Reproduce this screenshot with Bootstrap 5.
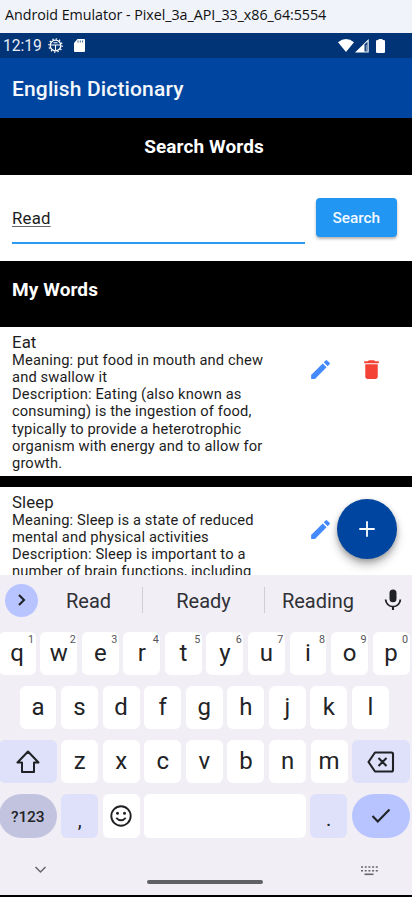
<!DOCTYPE html>
<html lang="en">
<head>
<meta charset="utf-8">
<meta name="viewport" content="width=device-width, initial-scale=1">
<title>English Dictionary</title>
<link href="https://cdn.jsdelivr.net/npm/bootstrap@5.3.0/dist/css/bootstrap.min.css" rel="stylesheet">
<style>
html,body{height:897px;overflow:hidden}
body{font-family:Roboto,"Liberation Sans",sans-serif;color:#1d1d1d;background:#000}
svg{display:block;flex:none}
.window-title{height:33px;background:#f0f3fa;color:#111;font:14.3px/30px "Open Sans","Noto Sans",sans-serif;padding-left:5px;white-space:nowrap;letter-spacing:-.05px}
.phone-status{height:25px;background:#003476;color:#e9eef6;font-size:15.6px;line-height:26px;padding:0 26px 0 3px}
.app-head{height:60px;background:#0046a0;color:#f4f7fb;font-size:21px;font-weight:500;line-height:62px;padding:0 12px;letter-spacing:.14px}
.search-head{height:56.5px;font-size:19px;font-weight:700;line-height:57px;letter-spacing:.1px}
.search-form{height:86px;background:#fff;padding:0 15px 0 12px;gap:11px}
.search-field{height:46.5px;margin-top:23px;border-bottom:2.2px solid #2b9af3;font-size:16.8px;line-height:41px}
.search-field span{text-decoration:underline;text-decoration-thickness:1px;text-underline-offset:2px;text-decoration-color:#666;letter-spacing:.2px}
.search-btn,.search-btn:hover{width:81.5px;height:39px;margin-top:23.5px;border:0;border-radius:4px;background:#2196f3;color:#f3f9ff;font-size:15.4px;font-weight:500;line-height:40px;padding:0;box-shadow:0 2px 3px rgba(0,0,0,.3)}
.words-head{height:66.9px;padding:0 12px;font-size:19px;font-weight:700;line-height:58px;letter-spacing:.1px}
.word-item{background:#fff;height:148.6px;padding:4.6px 12px 0;margin-bottom:11px}
.word-name{font-size:16.8px;line-height:20px;letter-spacing:.1px}
.word-text{font-size:14.7px;line-height:17.15px;letter-spacing:.14px;width:275px}
.word-item.cut{height:88.4px;margin:0;overflow:hidden}
.word-tools{gap:26px;margin:25.5px 16px 0 0}
.add-btn{position:absolute;left:337.4px;top:499px;width:60px;height:60px;border-radius:50%;background:#0046a0;border:0;box-shadow:0 6px 10px rgba(0,0,0,.25),0 2px 5px rgba(0,0,0,.22);padding:18px}
.keyboard{position:relative;height:320px;background:#f1eff5;color:#202124;overflow:hidden}
.suggest{height:56.4px;font-size:20px;color:#303136}
.suggest .more{width:33px;height:33px;margin:0 5px;border-radius:50%;background:#b8c4ff}
.suggest .word{padding-top:2px}
.suggest .rule{width:1px;height:26px;background:#cfced5}
.key-row{width:411px;margin-left:-1.3px;height:43.6px;gap:4.6px;margin-bottom:10.4px}
.key{flex:0 0 36.96px;height:100%;border-radius:6px;background:#fff;position:relative;font-size:24px;line-height:42px;text-align:center;color:#222326}
.key sup{position:absolute;right:1.5px;top:8.5px;font-size:10.8px;line-height:0;color:#55565a}
.key.tint{background:#dfe0fa}
.key.wide{flex-basis:58px}
.key.oval{border-radius:23px}
</style>
<script src="https://cdn.jsdelivr.net/npm/bootstrap@5.3.0/dist/js/bootstrap.bundle.min.js"></script>
</head>
<body>
<header>
<div class="window-title">Android Emulator - Pixel_3a_API_33_x86_64:5554</div>
<div class="phone-status d-flex align-items-center">
<span style="width:38px">12:19</span>
<svg style="margin-left:6.5px" width="15" height="15" viewBox="0 0 15 15" fill="none" stroke="#fff"><circle cx="7.5" cy="7.5" r="5.3" stroke-width="1.3"/><circle cx="7.5" cy="7.5" r="6.6" stroke-width="1.3" stroke-dasharray="1.4 2.06"/><path d="M2.5 7h10M7.5 7v5M5.5 4.7h4" stroke-width="1.1"/></svg>
<svg style="margin-left:10px" width="13" height="15" viewBox="0 0 13 15"><path d="M4.5 1H11q1 0 1 1v11q0 1-1 1H2q-1 0-1-1V5z" fill="#fff"/><path d="M5 2.5v2M7.3 2.5v2M9.6 2.5v2" stroke="#003476" stroke-width=".8"/></svg>
<svg class="ms-auto" width="48" height="16" viewBox="0 0 48 16"><path d="M0 4.3Q8-2.4 16 4.3L8 14z" fill="#fff"/><path d="M17 14.5 30.7 1v13.5z" fill="#fff"/><path d="M26.5 6.5v7h3V3.5z" fill="#003476"/><path d="M27.8 7.5v5.5h1V6.5z" fill="#8fa5c4"/><rect x="38" y="2" width="9" height="13" rx="1.2" fill="#fff"/><path d="M40.5 1h4v2h-4z" fill="#fff"/></svg>
</div>
<div class="app-head">English Dictionary</div>
</header>
<main>
<div class="search-head text-white text-center" style="padding-right:4px">Search Words</div>
<form class="search-form d-flex">
<div class="search-field flex-grow-1"><span>Read</span></div>
<button type="button" class="btn search-btn">Search</button>
</form>
<div class="words-head text-white">My Words</div>
<article class="word-item d-flex justify-content-between align-items-start">
<div><div class="word-name">Eat</div><div class="word-text">Meaning: put food in mouth and chew<br>and swallow it<br>Description: Eating (also known as<br>consuming) is the ingestion of food,<br>typically to provide a heterotrophic<br>organism with energy and to allow for<br>growth.</div></div>
<div class="word-tools d-flex"><svg width="25" height="25" viewBox="0 0 24 24" fill="#448aff"><path d="M3 17.25V21h3.75L17.81 9.94l-3.75-3.75L3 17.25zM20.71 7.04a1 1 0 0 0 0-1.41l-2.34-2.34a1 1 0 0 0-1.41 0l-1.83 1.83 3.75 3.75 1.83-1.83z"/></svg><svg width="25" height="25" viewBox="0 0 24 24" fill="#f44336"><path d="M6 19a2 2 0 0 0 2 2h8a2 2 0 0 0 2-2V7H6v12zM19 4h-3.5l-1-1h-5l-1 1H5v2h14V4z"/></svg></div>
</article>
<article class="word-item cut d-flex justify-content-between align-items-start">
<div><div class="word-name">Sleep</div><div class="word-text">Meaning: Sleep is a state of reduced<br>mental and physical activities<br>Description: Sleep is important to a<br>number of brain functions, including</div></div>
<div class="word-tools d-flex"><svg width="25" height="25" viewBox="0 0 24 24" fill="#448aff"><path d="M3 17.25V21h3.75L17.81 9.94l-3.75-3.75L3 17.25zM20.71 7.04a1 1 0 0 0 0-1.41l-2.34-2.34a1 1 0 0 0-1.41 0l-1.83 1.83 3.75 3.75 1.83-1.83z"/></svg><svg width="25" height="25"></svg></div>
</article>
<button class="add-btn" aria-label="Add word"><svg width="24" height="24" viewBox="0 0 24 24" fill="#fff"><path d="M19.7 12.9h-6.8v6.8h-1.8v-6.8H4.3v-1.8h6.8V4.3h1.8v6.8h6.8z"/></svg></button>
</main>
<section class="keyboard">
<div class="suggest d-flex align-items-center" style="padding-bottom:6.6px">
<div class="more d-flex align-items-center justify-content-center"><svg width="12" height="14" viewBox="0 0 12 14" fill="none" stroke="#202124" stroke-width="2.1"><path d="m3 2 5 5-5 5"/></svg></div>
<div class="word text-center" style="width:99px;padding-right:8px">Read</div><div class="rule"></div>
<div class="word text-center" style="width:121px">Ready</div><div class="rule"></div>
<div class="word text-center" style="width:106px">Reading</div>
<svg style="margin-left:8px" width="28" height="28" viewBox="0 0 24 24" fill="#202124"><path d="M12 14a3 3 0 0 0 3-3V6a3 3 0 0 0-6 0v5a3 3 0 0 0 3 3z"/><path d="M17.5 11.5a5.5 5.5 0 0 1-11 0H4.9a7.1 7.1 0 0 0 6.2 6.7V20.5h1.8v-2.3A7.1 7.1 0 0 0 19.1 11.5z"/></svg>
</div>
<div class="key-row d-flex"><div class="key">q<sup>1</sup></div><div class="key">w<sup>2</sup></div><div class="key">e<sup>3</sup></div><div class="key">r<sup>4</sup></div><div class="key">t<sup>5</sup></div><div class="key">y<sup>6</sup></div><div class="key">u<sup>7</sup></div><div class="key">i<sup>8</sup></div><div class="key">o<sup>9</sup></div><div class="key">p<sup>0</sup></div></div>
<div class="key-row d-flex justify-content-center"><div class="key">a</div><div class="key">s</div><div class="key">d</div><div class="key">f</div><div class="key">g</div><div class="key">h</div><div class="key">j</div><div class="key">k</div><div class="key">l</div></div>
<div class="key-row d-flex justify-content-between">
<div class="key wide tint d-flex align-items-center justify-content-center"><svg width="26" height="26" viewBox="0 0 26 26" fill="none" stroke="#202124" stroke-width="2" stroke-linejoin="round"><path d="M13 2.5 2.5 13.5H7V23h12v-9.5h4.5z"/></svg></div>
<div class="key">z</div><div class="key">x</div><div class="key">c</div><div class="key">v</div><div class="key">b</div><div class="key">n</div><div class="key">m</div>
<div class="key wide tint d-flex align-items-center justify-content-center"><svg width="28" height="22" viewBox="0 0 28 22" fill="none" stroke="#202124" stroke-width="2.1" stroke-linejoin="round"><path d="M8 1.5H24.5q1.5 0 1.5 1.5v16q0 1.5-1.5 1.5H8L1.5 11zM11.5 7l8 8m0-8-8 8"/></svg></div>
</div>
<div class="key-row d-flex justify-content-between" style="height:44.5px">
<div class="key wide oval" style="background:#c2c3de;font-size:15.5px;font-weight:500;line-height:46px;letter-spacing:-.2px">?123</div>
<div class="key tint" style="font-size:20px;line-height:53px">,</div>
<div class="key d-flex align-items-center justify-content-center"><svg width="24" height="24" viewBox="0 0 24 24" fill="none" stroke="#202124" stroke-width="1.9"><circle cx="12" cy="12" r="9.7"/><path d="M7.3 13.8q4.7 5 9.4 0"/><circle cx="8.5" cy="9.3" r="1.5" fill="#202124" stroke="none"/><circle cx="15.5" cy="9.3" r="1.5" fill="#202124" stroke="none"/></svg></div>
<div class="key flex-grow-1"></div>
<div class="key tint" style="font-size:20px;line-height:50px">.</div>
<div class="key wide oval d-flex align-items-center justify-content-center" style="background:#b8c4ff"><svg width="20" height="16" viewBox="0 0 20 16" fill="none" stroke="#202124" stroke-width="2.1"><path d="m1.5 8 5.3 5.5L18.5 1.5"/></svg></div>
</div>
<div class="d-flex justify-content-between align-items-start" style="padding:12.6px 34px 0">
<svg class="mt-1" width="13" height="10" viewBox="0 0 13 10" fill="none" stroke="#65666b" stroke-width="1.5"><path d="m1.5 2 5 5 5-5"/></svg>
<div style="width:116px;height:4.5px;border-radius:3px;background:#606166;margin:18.5px 0 0 2px"></div>
<svg class="mt-1" width="18" height="12" viewBox="0 0 18 12" stroke="#65666b" stroke-width="1.6"><path d="M1 2h17M1 5.7h17" stroke-dasharray="2 1.7"/><path d="M4.5 9.3h9"/></svg>
</div>
</section>
</body>
</html>
